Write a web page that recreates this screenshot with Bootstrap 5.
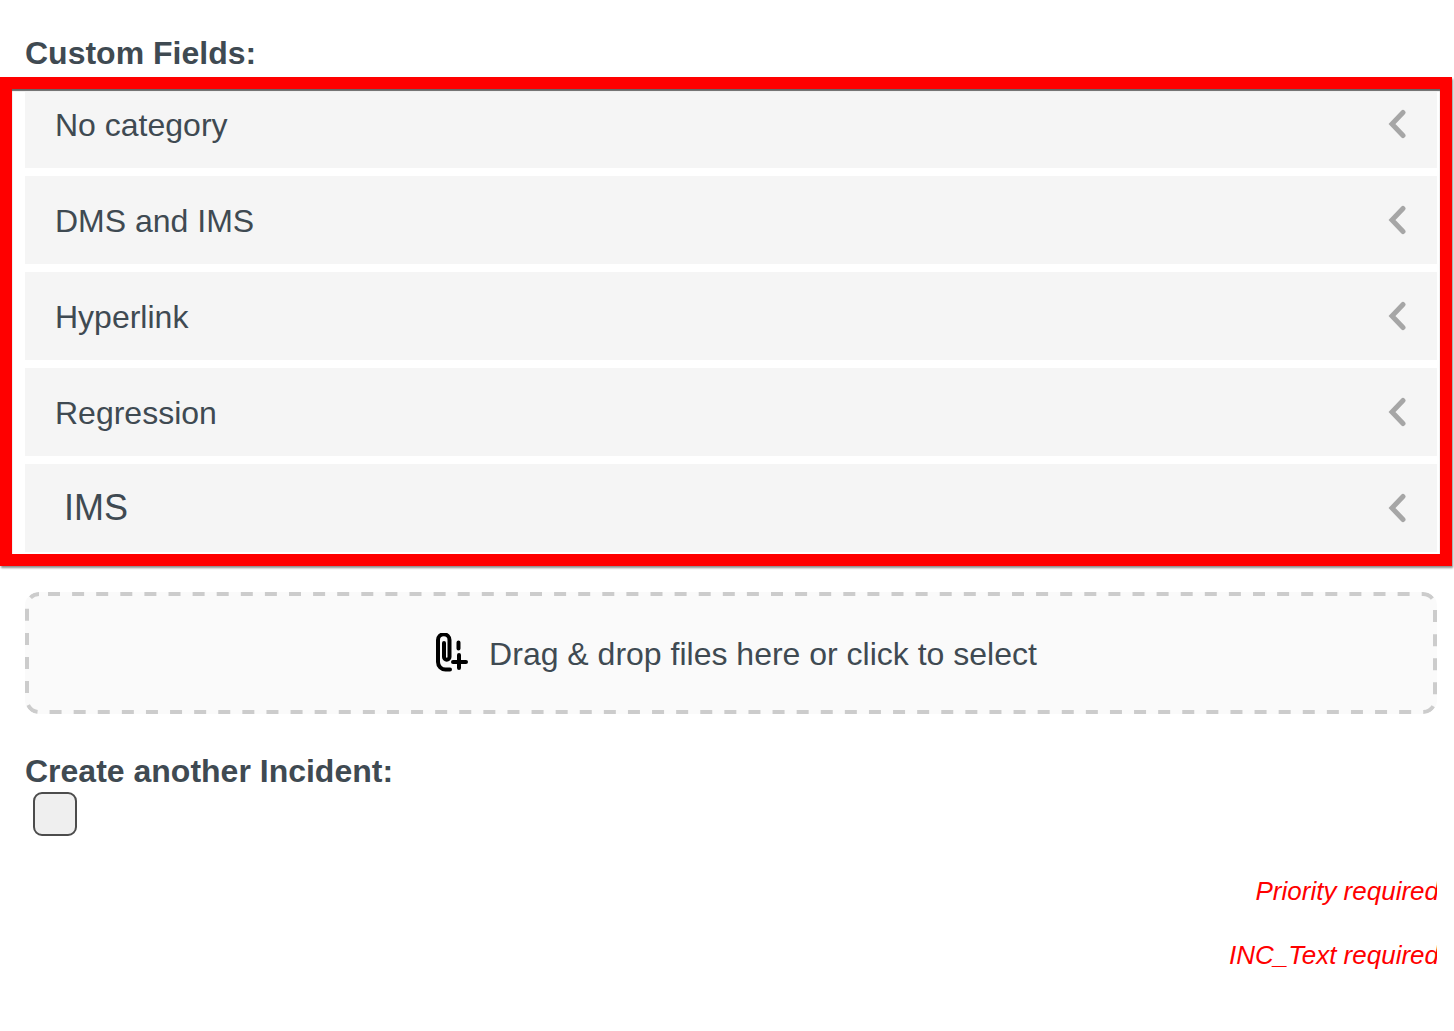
<!DOCTYPE html>
<html lang="en">
<head>
  <meta charset="UTF-8">
  <meta name="viewport" content="width=device-width, initial-scale=1">
  <title>Custom Fields</title>
  <link href="https://cdn.jsdelivr.net/npm/bootstrap@5.3.0/dist/css/bootstrap.min.css" rel="stylesheet">
  <style>
    body {
      font-family: "Liberation Sans", Arial, sans-serif;
      color: #3f4a52;
      background: #fff;
    }
    .field-title {
      font-size: 32px;
      line-height: 36px;
      font-weight: 700;
      padding-left: 25px;
    }
    .title-top { padding-top: 35px; height: 77px; }
    .red-frame {
      width: 1452px;
      height: 489px;
      border: 12px solid #f00;
      padding: 3px 3px 0 13px;
      box-shadow: 1px 2px 2px rgba(0,0,0,.45), inset 0 2px 1px rgba(0,0,0,.6);
    }
    .group-row {
      background: #f5f5f5;
      height: 88px;
      margin-bottom: 8px;
      padding: 0 30px;
      font-size: 32px;
    }
    .group-row span { padding-top: 2px; }
    .group-row:first-child { height: 76px; padding-bottom: 12px; }
    .group-row:last-child { margin-bottom: 0; padding-left: 39px; font-size: 36px; }
    .group-row:last-child span { padding-top: 0; }
    .chev { width: 18px; height: 30px; margin-right: 1px; }
    .drop-zone {
      margin: 26px 17px 0 25px;
      padding: 2px 0 0 11px;
      height: 122px;
      background-color: #fafafa;
      background-image: url("data:image/svg+xml,%3Csvg xmlns='http://www.w3.org/2000/svg' width='1412' height='122'%3E%3Crect x='2' y='2' width='1408' height='118' rx='12' fill='none' stroke='%23ccc' stroke-width='4' stroke-dasharray='12 12.1' stroke-dashoffset='-9'/%3E%3C/svg%3E");
      background-repeat: no-repeat;
      border-radius: 14px;
      font-size: 32px;
    }
    .clip { width: 32px; height: 40px; margin-right: 21px; margin-top: -2px; }
    .create-title { margin-top: 39px; }
    .box-check {
      width: 44px;
      height: 44px;
      margin: 3px 0 0 33px;
      background: #efefef;
      border: 2px solid #4c4c4c;
      border-radius: 9px;
    }
    .req-list { width: 1437px; overflow: hidden; white-space: nowrap; }
    .req-msg {
      color: #f00;
      font-size: 26px;
      font-style: italic;
      line-height: 30px;
      margin-top: 34px;
      margin-right: -2px;
    }
    .req-first { margin-top: 40px; }
  </style>
</head>
<body>
  <div class="field-title title-top">Custom Fields:</div>
  <div class="red-frame">
    <div class="group-row d-flex align-items-center justify-content-between"><span>No category</span>
      <svg class="chev" viewBox="0 0 18 30"><path d="M15 3.500 4 15l11 11.500" fill="none" stroke="#a6a6a6" stroke-width="5" stroke-linecap="round"/></svg></div>
    <div class="group-row d-flex align-items-center justify-content-between"><span>DMS and IMS</span>
      <svg class="chev" viewBox="0 0 18 30"><path d="M15 3.500 4 15l11 11.500" fill="none" stroke="#a6a6a6" stroke-width="5" stroke-linecap="round"/></svg></div>
    <div class="group-row d-flex align-items-center justify-content-between"><span>Hyperlink</span>
      <svg class="chev" viewBox="0 0 18 30"><path d="M15 3.500 4 15l11 11.500" fill="none" stroke="#a6a6a6" stroke-width="5" stroke-linecap="round"/></svg></div>
    <div class="group-row d-flex align-items-center justify-content-between"><span>Regression</span>
      <svg class="chev" viewBox="0 0 18 30"><path d="M15 3.500 4 15l11 11.500" fill="none" stroke="#a6a6a6" stroke-width="5" stroke-linecap="round"/></svg></div>
    <div class="group-row d-flex align-items-center justify-content-between"><span>IMS</span>
      <svg class="chev" viewBox="0 0 18 30"><path d="M15 3.500 4 15l11 11.500" fill="none" stroke="#a6a6a6" stroke-width="5" stroke-linecap="round"/></svg></div>
  </div>
  <div class="drop-zone d-flex align-items-center justify-content-center">
    <svg class="clip" viewBox="0 0 32 40" fill="none" stroke="#000" stroke-width="4" stroke-linecap="round"><path d="M14 36.500H9.500A7.500 7.500 0 0 1 2 29V7a5.750 5.750 0 0 1 11.500 0v17a2.750 2.750 0 0 1-5.500 0V10"/><path d="M22.500 9.500v6M17 29h13M23 22v13"/></svg>
    <span>Drag &amp; drop files here or click to select</span>
  </div>
  <div class="field-title create-title">Create another Incident:</div>
  <div class="box-check"></div>
  <div class="req-list text-end">
    <div class="req-msg req-first">Priority required</div>
    <div class="req-msg">INC_Text required</div>
  </div>
  <script src="https://cdn.jsdelivr.net/npm/bootstrap@5.3.0/dist/js/bootstrap.bundle.min.js"></script>
</body>
</html>
